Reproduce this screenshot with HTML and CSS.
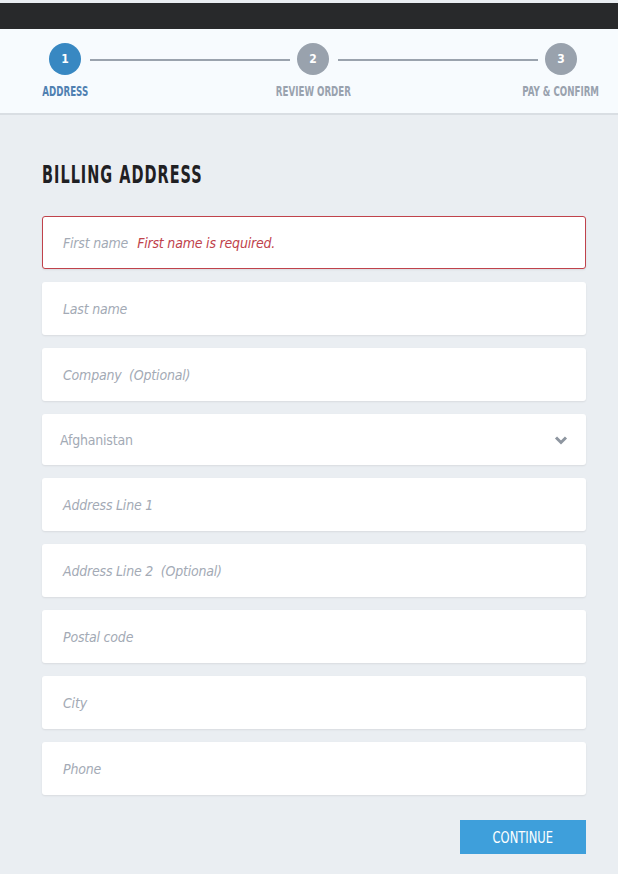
FILE: index.html
```html
<!DOCTYPE html>
<html>
<head>
<meta charset="utf-8">
<link rel="stylesheet" href="styles.css">
</head>
<body>
<div class="topbar"></div>
<div class="stepper">
  <div class="step active">
    <div class="circle">1</div>
    <div class="label"><span>ADDRESS</span></div>
  </div>
  <div class="line"></div>
  <div class="step">
    <div class="circle">2</div>
    <div class="label"><span>REVIEW ORDER</span></div>
  </div>
  <div class="line"></div>
  <div class="step">
    <div class="circle">3</div>
    <div class="label"><span>PAY &amp; CONFIRM</span></div>
  </div>
</div>
<main class="content">
  <h1 class="title"><span>BILLING ADDRESS</span></h1>
  <div class="field error"><span class="ph">First name</span><span class="err">First name is required.</span></div>
  <div class="field"><span class="ph">Last name</span></div>
  <div class="field"><span class="ph">Company&nbsp; (Optional)</span></div>
  <div class="field select"><span class="val">Afghanistan</span>
    <svg class="chev" width="14" height="10" viewBox="0 0 14 10"><path d="M2 2.5 L7 7.5 L12 2.5" fill="none" stroke="#8e96a0" stroke-width="3"/></svg>
  </div>
  <div class="field"><span class="ph">Address Line 1</span></div>
  <div class="field"><span class="ph">Address Line 2&nbsp; (Optional)</span></div>
  <div class="field"><span class="ph">Postal code</span></div>
  <div class="field"><span class="ph">City</span></div>
  <div class="field"><span class="ph">Phone</span></div>
  <div class="actions"><button class="btn"><span>CONTINUE</span></button></div>
</main>
</body>
</html>
```
FILE: styles.css
```css
html, body { margin: 0; padding: 0; }
body {
  background: #eaeef2;
  font-family: "DejaVu Sans Condensed", "Liberation Sans", sans-serif;
}
.topbar {
  margin-top: 3px;
  height: 26px;
  background: #28292b;
}
.stepper {
  display: flex;
  align-items: flex-start;
  background: #f7fbfe;
  border-bottom: 2px solid #d9dee3;
  height: 86px;
  box-sizing: border-box;
  padding: 14px 41px 0 49px;
}
.step {
  display: flex;
  flex-direction: column;
  align-items: center;
  width: 32px;
}
.circle {
  width: 32px;
  height: 32px;
  border-radius: 50%;
  background: #99a2ad;
  color: #fff;
  font-weight: bold;
  font-size: 12px;
  display: flex;
  align-items: center;
  justify-content: center;
}
.step.active .circle { background: #3888c2; }
.label {
  margin-top: 8px;
  font-size: 14px;
  font-weight: bold;
  color: #99a2ae;
  white-space: nowrap;
  line-height: 16px;
}
.label span {
  display: inline-block;
  transform: scaleX(0.69);
  transform-origin: center;
}
.step.active .label { color: #4f80b1; }
.line {
  flex: 1;
  height: 2px;
  background: #9aa3ad;
  margin: 16px 7px 0 9px;
}
.content {
  padding: 46px 32px 20px 42px;
}
.title {
  margin: 0 0 27px;
  font-size: 24px;
  font-weight: bold;
  letter-spacing: 1.5px;
  color: #1f2023;
  line-height: 28px;
  white-space: nowrap;
}
.title span {
  display: inline-block;
  transform: scaleX(0.67);
  transform-origin: left center;
}
.field {
  height: 53px;
  box-sizing: border-box;
  background: #fff;
  border-radius: 3px;
  box-shadow: 0 1px 2px rgba(0,0,0,0.08);
  margin-bottom: 13px;
  display: flex;
  align-items: center;
  padding: 0 21px;
  font-size: 14px;
  letter-spacing: -0.2px;
}
.field.error { border: 1px solid #c0424b; padding: 0 20px; }
.ph { font-style: italic; color: #a3aab5; }
.err { font-style: italic; color: #c0424b; margin-left: 9px; }
.select { height: 51px; padding: 0 18px 0 18px; justify-content: space-between; }
.val { color: #a3aab5; }
.actions {
  display: flex;
  justify-content: flex-end;
  margin-top: 25px;
}
.btn {
  width: 126px;
  height: 34px;
  border: none;
  background: #3e9fdb;
  color: #fff;
  font-family: inherit;
  font-size: 16px;
  padding: 0;
}
.btn span {
  display: inline-block;
  transform: scaleX(0.8);
}
```
